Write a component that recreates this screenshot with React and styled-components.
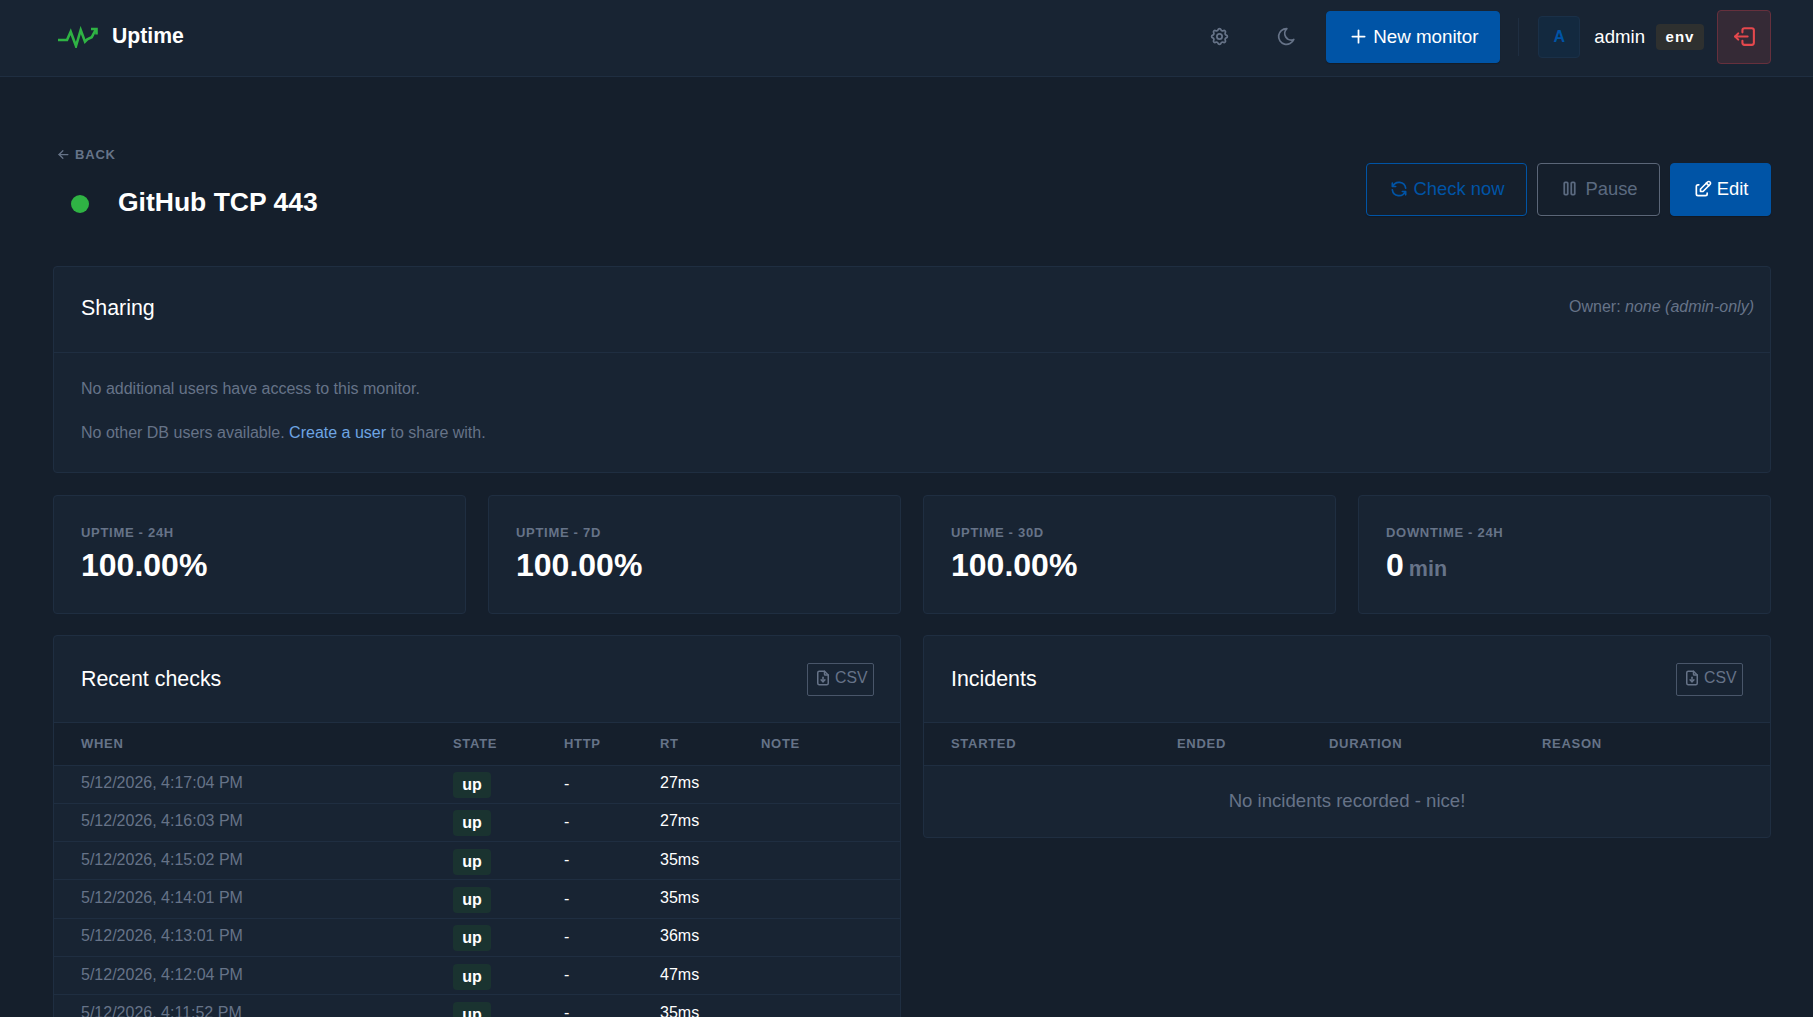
import React from "react";
import styled, { createGlobalStyle } from "styled-components";
import {
  TbArrowLeft,
  TbEdit,
  TbFileDownload,
  TbLogout2,
  TbMoon,
  TbPlayerPause,
  TbPlus,
  TbRefresh,
  TbSettings,
} from "react-icons/tb";

const GlobalStyle = createGlobalStyle`
  html, body {
    margin: 0;
    height: 100%;
    overflow: hidden;
    background: #151f2c;
  }
  body {
    font-family: "Liberation Sans", Arial, sans-serif;
    color: #fff;
    font-size: 16px;
  }
  * { box-sizing: border-box; }
`;

const Header = styled.header`
  height: 77px;
  display: flex;
  align-items: center;
  padding: 0 42px 3px 58px;
  background: #182433;
  border-bottom: 1px solid #1f2e41;
`;

const Brand = styled.div`
  display: flex;
  align-items: center;
  gap: 14px;
  font-size: 21.2px;
  font-weight: 700;
  line-height: 24px;
  margin-right: auto;
`;

const BrandName = styled.span`
  margin-top: -2px;
`;

const IconLink = styled.button`
  background: none;
  border: 0;
  padding: 0;
  color: #667388;
  display: flex;
  margin-left: ${({ $ml }) => $ml}px;
  font-size: 21px;
`;

const Button = styled.button`
  display: inline-flex;
  align-items: center;
  justify-content: center;
  gap: ${({ $gap }) => $gap ?? 4}px;
  height: ${({ $h }) => $h || 53}px;
  width: ${({ $w }) => $w}px;
  margin-left: ${({ $ml }) => $ml || 0}px;
  padding: 0 0 ${({ $pb }) => $pb ?? 2}px;
  font: ${({ $size }) => $size || 18.4}px "Liberation Sans", Arial, sans-serif;
  border-radius: 4px;
  border: 1px solid ${({ $border }) => $border};
  background: ${({ $bg }) => $bg || "transparent"};
  color: ${({ $color }) => $color};
  box-shadow: 0 1px 1px rgba(0, 0, 0, 0.2);
`;

const Divider = styled.span`
  width: 1px;
  height: 38px;
  background: #1f2e41;
  margin: 0 19px 0 18px;
`;

const Avatar = styled.span`
  width: 42px;
  height: 42px;
  display: flex;
  align-items: center;
  justify-content: center;
  font-size: 16px;
  font-weight: 700;
  border-radius: 4px;
  background: #13293f;
  border: 1px solid #1a3048;
  color: #0054a6;
`;

const UserName = styled.span`
  font-size: 18.6px;
  margin-left: 14px;
`;

const EnvBadge = styled.span`
  width: 48px;
  height: 26px;
  margin: 0 13px 0 11px;
  display: flex;
  align-items: center;
  justify-content: center;
  border-radius: 4px;
  background: #2e302f;
  font-size: 15px;
  font-weight: 700;
  letter-spacing: 1px;
`;

const LogoutButton = styled.button`
  width: 54px;
  height: 54px;
  display: flex;
  align-items: center;
  justify-content: center;
  padding: 0;
  border-radius: 4px;
  border: 1px solid #66303d;
  background: #352a36;
  color: #e5484d;
  font-size: 25px;
`;

const Page = styled.main`
  padding: 67px 42px 0 53px;
`;

const BackLink = styled.a`
  display: flex;
  align-items: center;
  gap: 4px;
  height: 20px;
  padding-left: 3px;
  color: #667388;
  font-size: 13px;
  font-weight: 700;
  letter-spacing: 0.8px;
`;

const TitleRow = styled.div`
  display: flex;
  align-items: center;
  margin-bottom: 50px;
  height: 53px;
  margin-top: -1px;
`;

const TitleGroup = styled.div`
  display: flex;
  align-items: center;
  margin: 26px auto 0 0;
`;

const Dot = styled.span`
  width: 18px;
  height: 18px;
  border-radius: 50%;
  background: #2fb344;
  margin: 2px 29px 0 18px;
`;

const Title = styled.h1`
  margin: 0;
  font-size: 26.5px;
  font-weight: 700;
`;

const Actions = styled.div`
  display: flex;
  gap: 10px;
`;

const Card = styled.section`
  background: #182433;
  border: 1px solid #1f2e41;
  border-radius: 4px;
  overflow: hidden;
`;

const CardHeader = styled.div`
  display: flex;
  align-items: center;
  justify-content: space-between;
  height: ${({ $h }) => $h}px;
  padding: 0 ${({ $pr }) => $pr}px ${({ $pb }) => $pb || 0}px 27px;
  border-bottom: 1px solid #1f2e41;
`;

const CardTitle = styled.h3`
  margin: 0;
  font-size: 21.4px;
  font-weight: 400;
`;

const Owner = styled.span`
  font-size: 16px;
  color: #667388;
  margin-top: -2px;
`;

const SharingBody = styled.div`
  padding: 27px 27px 0;
  height: 119px;
  color: #667388;
  font-size: 16px;
`;

const SharingLine = styled.p`
  margin: 0 0 26px;
  line-height: 18px;
`;

const ShareLink = styled.a`
  color: #6ea5e3;
`;

const StatGrid = styled.div`
  display: grid;
  grid-template-columns: repeat(4, 1fr);
  gap: 22px;
  margin: 22px 0 21.5px;
`;

const StatCard = styled(Card)`
  height: 118.5px;
  padding: 29px 27px 0;
`;

const StatLabel = styled.div`
  font-size: 13px;
  font-weight: 700;
  letter-spacing: 0.7px;
  color: #667388;
  line-height: 15px;
`;

const StatValue = styled.div`
  font-size: 32px;
  font-weight: 700;
  line-height: 40px;
  margin-top: 5px;
`;

const StatUnit = styled.span`
  font-size: 21.5px;
  font-weight: 700;
  color: #667388;
  margin-left: 5px;
`;

const Columns = styled.div`
  display: grid;
  grid-template-columns: 1fr 1fr;
  gap: 22px;
  align-items: start;
`;

const CsvButton = styled.button`
  width: 67px;
  height: 33px;
  display: flex;
  align-items: center;
  justify-content: center;
  gap: 3.5px;
  padding: 0 0 2px;
  background: none;
  border: 1px solid #49566a;
  border-radius: 2px;
  color: #667388;
  font: 15.8px "Liberation Sans", Arial, sans-serif;
`;

const Table = styled.table`
  width: 100%;
  border-collapse: collapse;
  table-layout: fixed;
`;

const Th = styled.th`
  width: ${({ $w }) => ($w ? `${$w}px` : "auto")};
  height: 42px;
  padding: 0 0 1px ${({ $first }) => ($first ? 27 : 0)}px;
  text-align: left;
  background: #151f2c;
  border-bottom: 1px solid #1f2e41;
  color: #667388;
  font-size: 13px;
  font-weight: 700;
  letter-spacing: 0.7px;
`;

const Td = styled.td`
  height: 38.3px;
  padding: 0 0 2px ${({ $first }) => ($first ? 27 : 0)}px;
  border-bottom: 1px solid #1f2e41;
  font-size: 16px;
  color: ${({ $muted }) => ($muted ? "#667388" : "#fff")};
`;

const UpBadge = styled.span`
  display: flex;
  align-items: center;
  justify-content: center;
  width: 38px;
  height: 26px;
  margin-top: 4px;
  border-radius: 4px;
  background: #1a3330;
  font-size: 16px;
  font-weight: 700;
`;

const Dash = styled.span`
  display: block;
  margin-top: 1px;
`;

const EmptyCell = styled.td`
  height: 72px;
  text-align: center;
  color: #667388;
  font-size: 18.6px;
`;

const checks = [
  ["5/12/2026, 4:17:04 PM", "27ms"],
  ["5/12/2026, 4:16:03 PM", "27ms"],
  ["5/12/2026, 4:15:02 PM", "35ms"],
  ["5/12/2026, 4:14:01 PM", "35ms"],
  ["5/12/2026, 4:13:01 PM", "36ms"],
  ["5/12/2026, 4:12:04 PM", "47ms"],
  ["5/12/2026, 4:11:52 PM", "35ms"],
];

const stats = [
  ["UPTIME - 24H", "100.00%"],
  ["UPTIME - 7D", "100.00%"],
  ["UPTIME - 30D", "100.00%"],
  ["DOWNTIME - 24H", "0", "min"],
];

const Logo = () => (
  <svg width="40" height="22" viewBox="0 0 40 22" fill="none" stroke="#2fb344" strokeWidth="2.6">
    <path d="M0 14H9L12.7 5.7L18 20L22.7 4L27 15.7L29.3 13.3L33.7 11.3L37.5 4" />
    <path d="M33 3H38.5V8.5" />
  </svg>
);

const App = () => {
  return (
    <>
      <GlobalStyle />
      <Header>
        <Brand>
          <Logo />
          <BrandName>Uptime</BrandName>
        </Brand>
        <IconLink $ml={0}>
          <TbSettings />
        </IconLink>
        <IconLink $ml={45.5}>
          <TbMoon />
        </IconLink>
        <Button $w={174} $h={52} $pb={0} $size={18.8} $bg="#0054a6" $border="#0054a6" $color="#fff" $ml={29.5}>
          <TbPlus size={21} />
          New monitor
        </Button>
        <Divider />
        <Avatar>A</Avatar>
        <UserName>admin</UserName>
        <EnvBadge>env</EnvBadge>
        <LogoutButton>
          <TbLogout2 />
        </LogoutButton>
      </Header>
      <Page>
        <BackLink>
          <TbArrowLeft size={15} />
          BACK
        </BackLink>
        <TitleRow>
          <TitleGroup>
            <Dot />
            <Title>GitHub TCP 443</Title>
          </TitleGroup>
          <Actions>
            <Button $w={161} $border="#0054a6" $color="#0054a6" $gap={5}>
              <TbRefresh size={20} />
              Check now
            </Button>
            <Button $w={123} $border="#5b6678" $color="#5b6a80" $gap={5}>
              <TbPlayerPause size={21} />
              Pause
            </Button>
            <Button $w={101} $bg="#0054a6" $border="#0054a6" $color="#fff" $gap={4}>
              <TbEdit size={20} />
              Edit
            </Button>
          </Actions>
        </TitleRow>
        <Card>
          <CardHeader $h={86} $pr={16} $pb={3}>
            <CardTitle>Sharing</CardTitle>
            <Owner>
              Owner: <em>none (admin-only)</em>
            </Owner>
          </CardHeader>
          <SharingBody>
            <SharingLine>No additional users have access to this monitor.</SharingLine>
            <SharingLine>
              No other DB users available. <ShareLink>Create a user</ShareLink> to share with.
            </SharingLine>
          </SharingBody>
        </Card>
        <StatGrid>
          {stats.map(([label, value, unit]) => (
            <StatCard key={label}>
              <StatLabel>{label}</StatLabel>
              <StatValue>
                {value}
                {unit && <StatUnit>{unit}</StatUnit>}
              </StatValue>
            </StatCard>
          ))}
        </StatGrid>
        <Columns>
          <Card>
            <CardHeader $h={87} $pr={26}>
              <CardTitle>Recent checks</CardTitle>
              <CsvButton>
                <TbFileDownload size={18} />
                CSV
              </CsvButton>
            </CardHeader>
            <Table>
              <thead>
                <tr>
                  <Th $first $w={399}>WHEN</Th>
                  <Th $w={111}>STATE</Th>
                  <Th $w={96}>HTTP</Th>
                  <Th $w={101}>RT</Th>
                  <Th>NOTE</Th>
                </tr>
              </thead>
              <tbody>
                {checks.map(([when, rt]) => (
                  <tr key={when}>
                    <Td $first $muted>{when}</Td>
                    <Td><UpBadge>up</UpBadge></Td>
                    <Td><Dash>-</Dash></Td>
                    <Td>{rt}</Td>
                    <Td />
                  </tr>
                ))}
              </tbody>
            </Table>
          </Card>
          <Card>
            <CardHeader $h={87} $pr={27}>
              <CardTitle>Incidents</CardTitle>
              <CsvButton>
                <TbFileDownload size={18} />
                CSV
              </CsvButton>
            </CardHeader>
            <Table>
              <thead>
                <tr>
                  <Th $first $w={253}>STARTED</Th>
                  <Th $w={152}>ENDED</Th>
                  <Th $w={213}>DURATION</Th>
                  <Th>REASON</Th>
                </tr>
              </thead>
              <tbody>
                <tr>
                  <EmptyCell colSpan={4}>No incidents recorded - nice!</EmptyCell>
                </tr>
              </tbody>
            </Table>
          </Card>
        </Columns>
      </Page>
    </>
  );
};

export default App;
